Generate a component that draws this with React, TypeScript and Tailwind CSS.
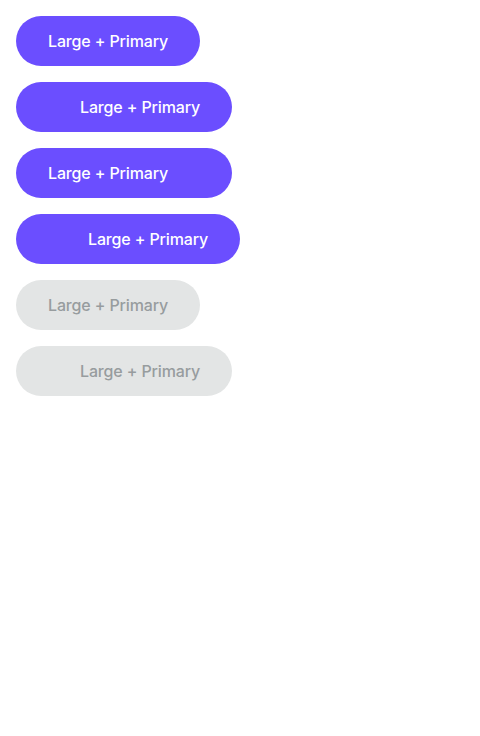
type Slot = 'none' | 'left' | 'right' | 'leftLg'

type Btn = { slot: Slot; disabled?: boolean }

const BUTTONS: Btn[] = [
  { slot: 'none' },
  { slot: 'left' },
  { slot: 'right' },
  { slot: 'leftLg' },
  { slot: 'none', disabled: true },
  { slot: 'left', disabled: true },
]

function Button({ slot, disabled }: Btn) {
  return (
    <button
      disabled={disabled}
      className={`flex items-center gap-4 h-[50px] px-8 rounded-full text-base font-medium tracking-[-0.14px] leading-none ${
        disabled ? 'bg-[#e3e5e5] text-[#979c9e]' : 'bg-[#6b4eff] text-white'
      }`}
    >
      {slot === 'left' && <span className="w-4 h-4" />}
      {slot === 'leftLg' && <span className="w-6 h-6" />}
      <span>Large + Primary</span>
      {slot === 'right' && <span className="w-4 h-4" />}
    </button>
  )
}

export default function App() {
  return (
    <div className="min-h-screen bg-white p-4 flex flex-col items-start gap-4 font-['Inter',sans-serif]">
      {BUTTONS.map((b, i) => (
        <Button key={i} {...b} />
      ))}
    </div>
  )
}
